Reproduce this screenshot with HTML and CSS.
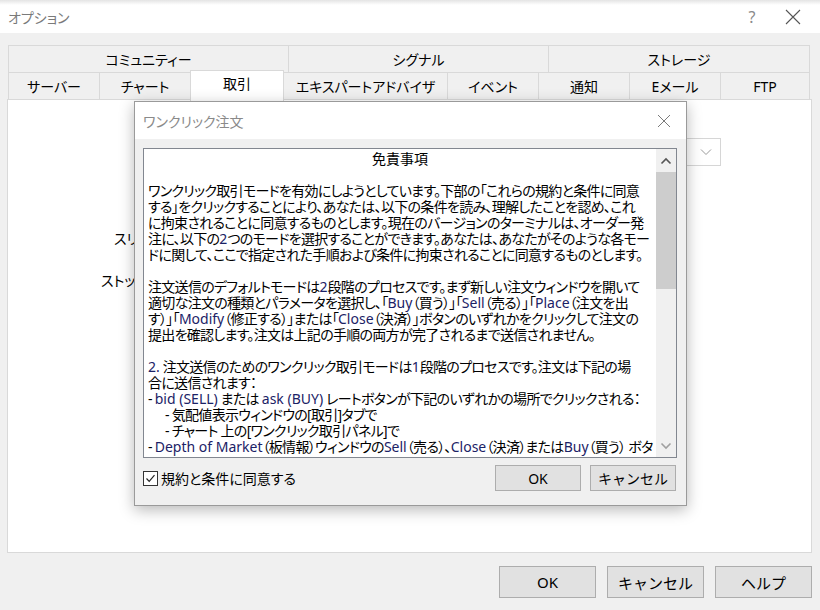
FILE: index.html
```html
<!DOCTYPE html>
<html lang="ja">
<head>
<meta charset="utf-8">
<title>オプション</title>
<link rel="stylesheet" href="styles.css">
</head>
<body>
<div class="window">
  <div class="titlebar">
    <span class="title">オプション</span>
    <span class="help">?</span>
    <svg class="wclose" width="16" height="16" viewBox="0 0 16 16"><path d="M1 1L15 15M15 1L1 15" stroke="#555" stroke-width="1.1" fill="none"/></svg>
  </div>

  <div class="tabs">
    <div class="tabrow row1">
      <div class="tab w280">コミュニティー</div>
      <div class="tab w260">シグナル</div>
      <div class="tab w261">ストレージ</div>
    </div>
    <div class="tabrow row2">
      <div class="tab w91">サーバー</div>
      <div class="tab w91">チャート</div>
      <div class="tab w93 active">取引</div>
      <div class="tab w164">エキスパートアドバイザ</div>
      <div class="tab w91">イベント</div>
      <div class="tab w91">通知</div>
      <div class="tab w91">Eメール</div>
      <div class="tab w89">FTP</div>
    </div>
  </div>

  <div class="panel">
    <div class="combo-row">
      <div class="combo">
        <svg width="12" height="8" viewBox="0 0 12 8"><path d="M1 1.5L6 6.5L11 1.5" stroke="#9a9a9a" stroke-width="1" fill="none"/></svg>
      </div>
    </div>
    <div class="field f1">スリッページ</div>
    <div class="field f2">ストップレベル</div>
  </div>

  <div class="buttons">
    <button class="btn">OK</button>
    <button class="btn">キャンセル</button>
    <button class="btn">ヘルプ</button>
  </div>
</div>

<div class="dialog">
  <div class="dtitle">
    <span class="dtext">ワンクリック注文</span>
    <svg class="dclose" width="14" height="14" viewBox="0 0 14 14"><path d="M1 1L13 13M13 1L1 13" stroke="#7a7a7a" stroke-width="1" fill="none"/></svg>
  </div>
  <div class="dbody">
    <div class="textbox">
      <div class="text">
        <div class="center">免責事項</div>
        <div class="blank"></div>
        <div>ワンクリック取引モードを有効にしようとしています。下部の「これらの規約と条件に同意</div>
        <div>する」をクリックすることにより、あなたは、以下の条件を読み、理解したことを認め、これ</div>
        <div>に拘束されることに同意するものとします。現在のバージョンのターミナルは、オーダー発</div>
        <div>注に、以下の<span class="lat">2</span>つのモードを選択することができます。あなたは、あなたがそのような各モー</div>
        <div>ドに関して、ここで指定された手順および条件に拘束されることに同意するものとします。</div>
        <div class="blank"></div>
        <div>注文送信のデフォルトモードは<span class="lat">2</span>段階のプロセスです。まず新しい注文ウィンドウを開いて</div>
        <div>適切な注文の種類とパラメータを選択し、「<span class="lat">Buy</span>（買う）」「<span class="lat">Sell</span>（売る）」「<span class="lat">Place</span>（注文を出</div>
        <div>す）」「<span class="lat">Modify</span>（修正する）」または「<span class="lat">Close</span>（決済）」ボタンのいずれかをクリックして注文の</div>
        <div>提出を確認します。注文は上記の手順の両方が完了されるまで送信されません。</div>
        <div class="blank"></div>
        <div><span class="lat">2.</span> 注文送信のためのワンクリック取引モードは<span class="lat">1</span>段階のプロセスです。注文は下記の場</div>
        <div>合に送信されます：</div>
        <div>- <span class="lat">bid (SELL)</span> または <span class="lat">ask (BUY)</span> レートボタンが下記のいずれかの場所でクリックされる：</div>
        <div class="ind">- 気配値表示ウィンドウの[取引]タブで</div>
        <div class="ind">- チャート 上の[ワンクリック取引パネル]で</div>
        <div>- <span class="lat">Depth of Market</span>（板情報）ウィンドウの<span class="lat">Sell</span>（売る）、<span class="lat">Close</span>（決済）または<span class="lat">Buy</span>（買う） ボタ</div>
      </div>
      <div class="scrollbar">
        <div class="arrow">
          <svg width="12" height="8" viewBox="0 0 12 8"><path d="M1.5 6.5L6 2L10.5 6.5" stroke="#555" stroke-width="1.6" fill="none"/></svg>
        </div>
        <div class="track"><div class="thumb"></div></div>
        <div class="arrow">
          <svg width="12" height="8" viewBox="0 0 12 8"><path d="M1.5 1.5L6 6L10.5 1.5" stroke="#a0a0a0" stroke-width="1.6" fill="none"/></svg>
        </div>
      </div>
    </div>
    <div class="dfooter">
      <label class="check">
        <span class="box"><svg width="13" height="13" viewBox="0 0 13 13"><path d="M2.5 6.5L5.2 9.3L10.5 3.2" stroke="#222" stroke-width="1.2" fill="none"/></svg></span>
        <span>規約と条件に同意する</span>
      </label>
      <div class="dbtns">
        <button class="dbtn">OK</button>
        <button class="dbtn">キャンセル</button>
      </div>
    </div>
  </div>
</div>
</body>
</html>
```

FILE: styles.css
```css
* { box-sizing: border-box; }
html, body {
  margin: 0;
  padding: 0;
  width: 820px;
  height: 610px;
  overflow: hidden;
}
body {
  background: #f0f0f0;
  font-family: "Noto Sans", "Noto Sans CJK JP", sans-serif;
  font-feature-settings: "palt";
  color: #000;
  position: relative;
}
.window {
  display: flex;
  flex-direction: column;
  height: 610px;
}
.titlebar {
  height: 33px;
  background: linear-gradient(#e4e4e4 0, #ffffff 5px);
  display: flex;
  align-items: center;
  padding: 0 0 0 8px;
}
.title {
  font-size: 14px;
  color: #7a7a7a;
  flex: 1;
}
.help {
  font-size: 16px;
  color: #8a8a8a;
  width: 50px;
  text-align: center;
}
.wclose {
  margin: 0 19px 0 8px;
}
.tabs {
  margin: 12px 0 0 8px;
  width: 801px;
}
.tabrow {
  display: flex;
  height: 27px;
  border-left: 1px solid #d9d9d9;
}
.tab {
  border-top: 1px solid #d9d9d9;
  border-right: 1px solid #d9d9d9;
  display: flex;
  align-items: center;
  justify-content: center;
  font-size: 14px;
  background: #f0f0f0;
  flex: none;
}
.w280 { width: 280px; }
.w260 { width: 260px; }
.w261 { width: 261px; }
.w91 { width: 91px; }
.w93 { width: 93px; }
.w164 { width: 164px; }
.w89 { width: 89px; }
.tab.active {
  background: #fff;
  height: 31px;
  margin-top: -2px;
  border-left: 1px solid #d9d9d9;
  margin-left: -1px;
  width: 94px;
  position: relative;
  z-index: 2;
  align-items: flex-start;
  padding-top: 2px;
}
.panel {
  margin: 0 0 0 7px;
  width: 805px;
  height: 454px;
  background: #fff;
  border: 1px solid #d9d9d9;
  position: relative;
  z-index: 1;
  padding: 38px 0 0 0;
  font-size: 14px;
}
.combo-row {
  display: flex;
  justify-content: flex-end;
  padding-right: 90px;
}
.combo {
  width: 160px;
  height: 28px;
  border: 1px solid #d6d6d6;
  display: flex;
  align-items: center;
  justify-content: flex-end;
  padding-right: 8px;
}
.field { line-height: 20px; }
.f1 { margin: 63px 0 0 106px; }
.f2 { margin: 22px 0 0 93px; }
.buttons {
  display: flex;
  justify-content: flex-end;
  gap: 11px;
  padding: 13px 8px 0 0;
}
.btn {
  width: 97px;
  height: 32px;
  background: #e1e1e1;
  border: 1px solid #adadad;
  font-family: inherit;
  font-size: 15px;
  color: #000;
  padding: 0;
}

/* dialog */
.dialog {
  position: absolute;
  left: 134px;
  top: 101px;
  width: 553px;
  height: 405px;
  background: #f0f0f0;
  border: 1px solid #9a9a9a;
  box-shadow: 0 4px 14px rgba(0,0,0,0.28);
  z-index: 10;
  display: flex;
  flex-direction: column;
}
.dtitle {
  height: 37px;
  background: #fff;
  display: flex;
  align-items: center;
  padding: 0 0 0 8px;
  flex: none;
}
.dtext {
  flex: 1;
  font-size: 14px;
  color: #8a8a8a;
}
.dclose { margin-right: 15px; }
.dbody {
  padding: 9px 10px 0 8px;
  flex: 1;
  display: flex;
  flex-direction: column;
}
.textbox {
  width: 534px;
  height: 310px;
  background: #fff;
  border: 1px solid #828790;
  display: flex;
  overflow: hidden;
}
.text {
  flex: 1;
  padding: 2px 0 0 4px;
  font-size: 14px;
  line-height: 16px;
  white-space: nowrap;
  overflow: hidden;
  letter-spacing: -0.7px;
}
.text .center { text-align: center; padding-right: 4px; letter-spacing: 0; }
.text .blank { height: 16px; }
.text .ind { padding-left: 17px; }
.lat { color: #1b2266; letter-spacing: 0; }
.scrollbar {
  width: 20px;
  flex: none;
  background: #f0f0f0;
  display: flex;
  flex-direction: column;
}
.arrow {
  height: 23px;
  display: flex;
  align-items: center;
  justify-content: center;
  flex: none;
}
.track { flex: 1; }
.thumb {
  height: 117px;
  background: #cdcdcd;
}
.dfooter {
  display: flex;
  align-items: center;
  padding-top: 7px;
}
.check {
  display: flex;
  align-items: center;
  gap: 3px;
  font-size: 14px;
  flex: 1;
}
.box {
  width: 15px;
  height: 15px;
  border: 1px solid #333;
  background: #fff;
  display: flex;
  align-items: center;
  justify-content: center;
}
.dbtns {
  display: flex;
  gap: 9px;
}
.dbtn {
  width: 86px;
  height: 26px;
  background: #e1e1e1;
  border: 1px solid #adadad;
  font-family: inherit;
  font-size: 14px;
  color: #000;
  padding: 0;
}
```
